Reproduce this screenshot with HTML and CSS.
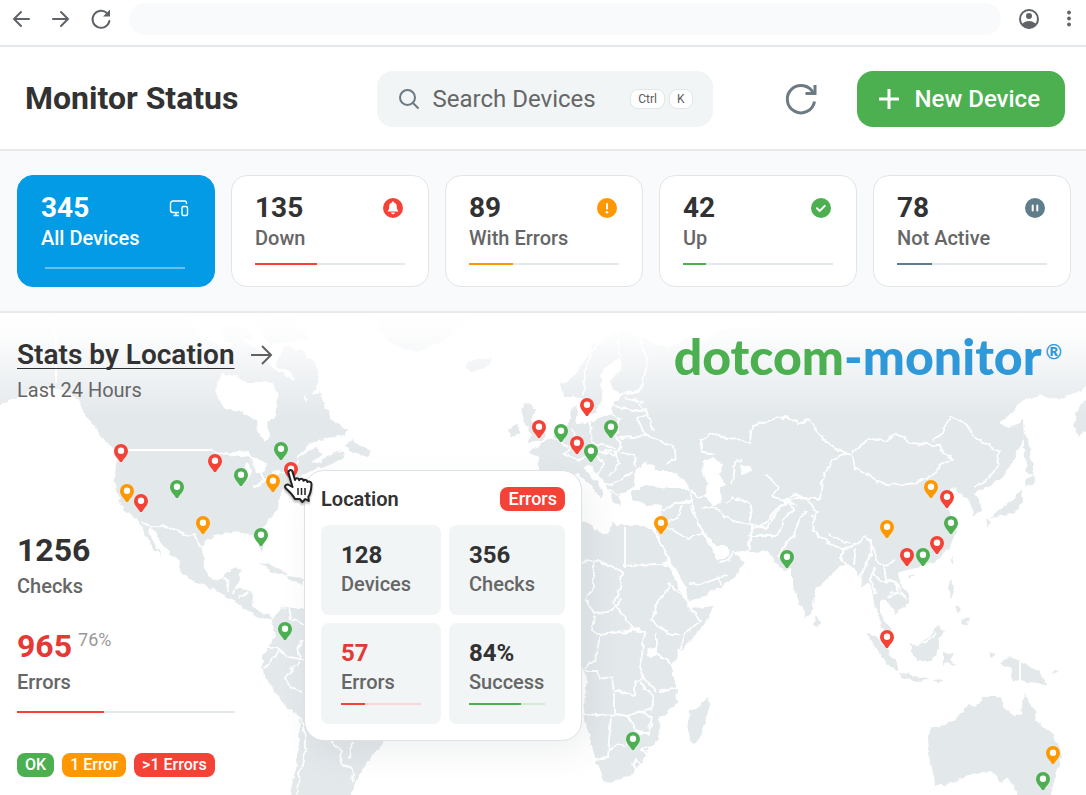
FILE: index.html
```html
<!DOCTYPE html>
<html lang="en">
<head>
<meta charset="utf-8">
<meta name="viewport" content="width=device-width, initial-scale=1">
<title>Monitor Status</title>
<link rel="stylesheet" href="styles.css">
</head>
<body>
<div class="page">
  <div class="chrome">
    <button class="chrome-btn" aria-label="Back"><svg viewBox="0 0 24 24"><path d="M20 12H5M12 5l-7 7 7 7"/></svg></button>
    <button class="chrome-btn" aria-label="Forward"><svg viewBox="0 0 24 24"><path d="M4 12h15M12 5l7 7-7 7"/></svg></button>
    <button class="chrome-btn" aria-label="Reload"><svg viewBox="0 0 24 24"><path d="M18.2 6.4A8.5 8.5 0 1 0 20.4 14"/><path class="solid" d="M21 2.5v7h-7z"/></svg></button>
    <input class="address" type="text" aria-label="Address">
    <button class="chrome-btn" aria-label="Profile"><svg viewBox="0 0 24 24"><circle cx="12" cy="12" r="9"/><circle class="solid" cx="12" cy="9" r="3"/><path class="solid" d="M5 17c2-2 4.500-3 7-3s5 1 7 3c-2 3-4.500 4.500-7 4.500S7 20 5 17z"/></svg></button>
    <button class="chrome-btn" aria-label="Menu"><svg viewBox="0 0 24 24"><g class="solid"><circle cx="12" cy="5.500" r="1.900"/><circle cx="12" cy="11.500" r="1.900"/><circle cx="12" cy="17.500" r="1.900"/></g></svg></button>
  </div>

  <header class="header">
    <h1 class="title">Monitor Status</h1>
    <label class="search">
      <svg class="search-icon" viewBox="0 0 24 24"><circle cx="10.500" cy="10.500" r="7.500"/><path d="M16 16l5.500 5.500"/></svg>
      <input class="search-input" type="text" placeholder="Search Devices" aria-label="Search Devices">
      <span class="keys"><kbd>Ctrl</kbd><kbd>K</kbd></span>
    </label>
    <button class="refresh" aria-label="Refresh"><svg viewBox="0 0 36 36"><path d="M30.500 12.500A13.700 13.700 0 1 0 31.500 20.500"/><path d="M32 4v8.500h-9.500"/></svg></button>
    <button class="new-device"><svg viewBox="0 0 24 24"><path d="M12 2v20M2 12h20"/></svg>New Device</button>
  </header>

  <nav class="filters">
    <button class="card card-active">
      <span class="card-top"><b>345</b><svg class="card-icon" viewBox="0 0 20 20"><path class="line" d="M17.500 6V5a2 2 0 0 0-2-2H4a2.500 2.500 0 0 0-2.500 2.500V12A2.500 2.500 0 0 0 4 14.500h6M7 14.500V17M4.500 17.500H10"/><rect class="line" x="13" y="8.500" width="5.500" height="9" rx="1.500"/></svg></span>
      <span class="card-label">All Devices</span>
      <span class="bar"><span class="fill"></span></span>
    </button>
    <button class="card">
      <span class="card-top"><b>135</b><svg class="card-icon" viewBox="0 0 20 20"><circle class="red" cx="10" cy="10" r="10"/><path class="white" d="M10 3.600c.7 0 1 .4 1 1 2 .6 2.800 2.200 2.800 4.200 0 2.400.6 3.600 1.700 4.700H4.500c1.100-1.100 1.700-2.300 1.700-4.700 0-2 .8-3.600 2.800-4.200 0-.6.3-1 1-1zM8 14.500h4c-.3 1.300-1 1.700-2 1.700s-1.700-.4-2-1.700z"/></svg></span>
      <span class="card-label">Down</span>
      <span class="bar"><span class="fill bg-red" style="width:41%"></span></span>
    </button>
    <button class="card">
      <span class="card-top"><b>89</b><svg class="card-icon" viewBox="0 0 20 20"><circle class="orange" cx="10" cy="10" r="10"/><path class="mark" d="M10 6v4.500"/><circle class="white" cx="10" cy="14.200" r="1.300"/></svg></span>
      <span class="card-label">With Errors</span>
      <span class="bar"><span class="fill bg-orange" style="width:29%"></span></span>
    </button>
    <button class="card">
      <span class="card-top"><b>42</b><svg class="card-icon" viewBox="0 0 20 20"><circle class="green" cx="10" cy="10" r="10"/><path class="mark" d="M6 10.300l2.800 2.600 5-5"/></svg></span>
      <span class="card-label">Up</span>
      <span class="bar"><span class="fill bg-green" style="width:15%"></span></span>
    </button>
    <button class="card">
      <span class="card-top"><b>78</b><svg class="card-icon" viewBox="0 0 20 20"><circle class="slate" cx="10" cy="10" r="10"/><path class="mark" d="M7.700 7.500v5M12.300 7.500v5"/></svg></span>
      <span class="card-label">Not Active</span>
      <span class="bar"><span class="fill bg-slate" style="width:23%"></span></span>
    </button>
  </nav>

  <main class="stats">
    <svg class="map" viewBox="0 313 1086 482" preserveAspectRatio="xMidYMid slice" aria-hidden="true">
      <defs>
        <filter id="rough" filterUnits="userSpaceOnUse" x="-20" y="290" width="1130" height="530">
          <feTurbulence type="fractalNoise" baseFrequency="0.13" numOctaves="2" seed="4"/>
          <feDisplacementMap in="SourceGraphic" scale="6" xChannelSelector="R" yChannelSelector="G"/>
        </filter>
        <linearGradient id="fade" x1="0" y1="0" x2="0" y2="1">
          <stop offset="0" stop-color="#fff"/>
          <stop offset="0.2" stop-color="#fff" stop-opacity="0.92"/>
          <stop offset="1" stop-color="#fff" stop-opacity="0"/>
        </linearGradient>
        <symbol id="pin" viewBox="0 0 16 20" overflow="visible">
          <path d="M8 1a7 7 0 0 1 7 7c0 4.500-4.200 7.500-5.600 10.200Q8 20 6.600 18.200C5.200 15.500 1 12.500 1 8a7 7 0 0 1 7-7z"/>
          <circle cx="8" cy="7.800" r="3.200" fill="#fff"/>
        </symbol>
      </defs>

      <g class="land" filter="url(#rough)">
        <!-- North and Central America -->
        <path d="M-20 300H180L200 335 225 350 240 340 262 352 272 368 285 375 298 385 305 402 313 395 320 391 325 408 333 420 347 429 345 436 325 438 312 442 302 450 296 460 305 452 316 447 322 455 310 464 320 462 334 452 345 453 335 463 318 468 305 474 294 480 288 486 282 490 278 500 279 509 270 518 262 528 264 544 262 551 258 544 254 537 245 533 230 532 215 535 206 542 203 550 204 568 212 580 224 577 230 569 241 569 239 580 235 588 248 590 253 595 252 606 260 613 270 614 274 620 266 618 256 617 248 610 240 604 226 596 215 590 195 582 182 573 179 562 166 550 156 533 150 526 148 532 157 548 162 556 153 548 143 530 138 519 126 511 118 497 115 480 116 460 113 449 100 436 92 424 84 412 76 398 64 390 50 387 35 389 14 399-5 408z"/>
        <path d="M345 446l8-8 6 7 13 6-4 5-13-3zM285 345l15 5 16 14 4 16-10 21-11-7-8-22-16-6zM255 322l35-5 20 22-40 5zM220 325l24 0 8 14-25 4z"/>
        <path d="M258 563l12 2 18 9-8 1-12-6zM286 576l18 2-2 6-15-4z"/>
        <path d="M370 300H480L455 335 415 352 392 345 380 330zM468 362l10-4 14 0-4 9-15 4-7-3z"/>
        <!-- South America -->
        <path d="M272 622L280 608 288 607 305 610 330 616 380 640 445 665 440 690 420 720 386 738 372 756 358 776 348 800H289L295 770 299 742 300 717 283 704 272 688 262 670 263 657 268 646 276 636z"/>
        <!-- Europe and Asia -->
        <path d="M1100 300V382L1073 394 1060 399 1045 396 1027 398 1012 411 1000 423 1010 428 1023 420 1024 437 1013 461 1000 480 986 488 973 493 980 500 982 512 973 515 971 502 962 495 955 488 947 490 944 500 953 497 947 505 954 518 956 532 950 546 940 558 925 566 910 569 898 573 900 583 909 594 909 604 902 609 895 615 892 608 886 599 879 602 879 613 886 622 892 632 893 642 886 634 881 626 876 610 873 590 869 582 863 588 860 578 856 569 847 564 838 568 830 576 815 590 814 608 806 618 799 602 794 590 790 568 785 570 776 563 768 551 752 552 734 551 724 545 716 545 706 533 702 534 711 548 718 559 727 557 731 549 737 556 744 563 735 578 720 587 700 598 688 601 686 588 679 574 669 557 660 540 656 532 661 521 662 505 646 506 634 501 631 492 646 486 668 489 690 489 681 478 668 471 658 471 646 461 636 470 633 487 623 493 618 497 622 506 614 503 608 490 600 477 589 464 583 468 592 478 604 490 600 499 590 484 578 475 540 475 538 458 528 452 538 447 549 439 556 434 566 428 571 418 570 409 576 405 578 413 576 424 586 423 600 419 611 414 614 402 624 394 640 393 642 389 622 393 613 389 611 380 622 368 620 358 608 364 600 376 602 390 600 404 594 414 586 412 582 398 574 397 563 397 560 384 574 376 583 363 592 346 606 336 622 330 636 334 650 342 670 348 690 335 700 345 720 330 760 325 800 300z"/>
        <path d="M1092 395l-14 12-5 16 6 14 13-12zM1024 428l5 18 5 29-7-3-3-24zM1025 481l10-6-2 8-7 5zM1022 489l1 14-9 11-14 1-12 4 12-9 13-9zM985 520l6 1-4 7z"/>
        <path d="M524 403l11 5-4 11 7 8 8 6-3 8-15 2 4-9-7-9-3-12zM509 431l9-7 2 9-10 4z"/>
        <!-- Africa -->
        <path d="M520 530L581 521 592 524 594 530 608 533 613 523 626 526 640 526 650 528 656 538 664 552 668 564 676 580 684 598 690 609 713 606 707 621 691 640 679 652 672 664 672 676 677 690 676 704 660 718 658 740 648 750 643 762 632 775 620 779 605 783 602 774 595 757 589 735 583 715 585 695 588 682 582 668 575 650 520 600z"/>
        <path d="M707 697l3 9-9 29-4 8-7-1-3-12 3-19 11-5zM816 615l5 7-4 5-3-4z"/>
        <!-- Islands of Southeast Asia -->
        <path d="M866 631l10 5 12 15 10 13 0 7-10-6-11-16zM899 673l16 3 15 4-14 1-15-4zM911 645l10-2 10-9 7-8 6 4-6 9 2 8-8 14-14 0-7-9zM944 653l10 0-4 6 6 7-9-5-3 5z"/>
        <path d="M950 580l5 9-4 9-3-8zM962 620l7-4-1 10-7-3zM954 605l7 4-4 6zM949 563l4-9-1 10zM909 577l6-2-4 5zM932 681l14-1-8 3zM988 652l8 2-4 4zM1000 662l10-5 10 4 15 7 7 10 8 9-12-4-12-1-13-2-2-10zM1050 673l8-2-3 3z"/>
        <!-- Australia -->
        <path d="M927 736L931 729 952 722 959 715 968 704 975 708 984 697 1001 697 1003 707 1015 717 1021 713 1024 692 1028 702 1035 709 1038 723 1050 732 1058 745 1062 756 1056 772 1050 800H1017L1015 786 1007 778 1003 783 991 771 970 774 955 781 945 785 934 785 932 768 928 754z"/>
      </g>

      <g class="water" filter="url(#rough)">
        <path d="M222 374l14 2 10 6 28 0 4 14-2 19-8 5 1 18-4 3-8-11-1-10-16-8-15-3-10-14 2-10z"/>
        <path d="M228 455l12-6 10 6-10 1zM252 458l14 4-3 10-7 0zM247 463l4 2-3 18-5-2zM253 486l14-9 4 2-14 8zM268 476l12-6 2 3-10 5z"/>
        <path d="M702 460l14-1 7 5-4 11 7 10-6 4 1 14-8 2-8-9 3-12-7-14zM740 465l9 0 2 7-9 2zM646 651l9-3 2 7-8 3z"/>
      </g>

      <g class="borders" filter="url(#rough)">
        <!-- Americas -->
        <path d="M212 450l18 6 18-3 10 10 6 18 18-8 12-4 4-9M142 523l14 4 20 1 10 8 8-2 6 12 6 3M224 577l5 4-2 10M239 581l-5 12M248 592l-10 6"/>
        <path d="M268 646l12 4-10 14-7 5M280 650l8 7 12 2 4 0M301 640l-3 12 3 6M289 607l2 12 12 4M300 662l-8 6-6 10 4 10 12 4M301 717l4 20 0 18-6 20-3 25M330 741l12 10-2 12 12 6 2 12M352 741l-2 20"/>
        <!-- Europe -->
        <path d="M583 396l2-22 5-22 16-14M620 356l-2-18M638 332l10 30-8 28M610 415l10 4-4 18 6 6M590 423l2 20 24 5M572 430l2 12-10 12 14 6 20-8 14-2M622 443l-6 12-18-4M552 438l16 8M595 455l8 8-4 12M614 450l6 14-10 12M620 452l14 4 2 12M620 438l26-2 28 10 2 12-10 6M645 436l-8-18 10-4-8-10M614 405l18 6 14-2M625 398l18 4M646 411l8 20M604 485l16-4 12-8M608 490l10 6"/>
        <!-- Central and eastern Asia -->
        <path d="M716 455l-14-2-2-12 12-8 8 4 16 2 14 4 2-18 16-4 18-5 12 8 10-4 6 8 12 14 20 12-14 6-10 22-2 16-26 0-8 4-12 14-6 12-14-2-24-6-18-14-12 4"/>
        <path d="M839 449l14 8 2 12 14 6 8 8 20 2 20-2 16-8 8-10 12-6-10-6-2-8-12 0-18-2-14-10-10 8-18-2-18 14M933 440l10-8 6-14 16 4 10 16 24 14-2 14-10 14-14 8"/>
        <path d="M732 484l2-22 8-2M766 474l12 14-6 8 18 6 4 10M783 502l10-8 12 4 12 14-4 8"/>
        <path d="M690 489l8 8 8-2M691 492l2 22 14 26M660 512l18-10 14 0M682 504l-4 14-14 6M664 526l24 12 14-4M726 504l8-6 16 6 2 26-4 22M752 530l12-6 16-18 8-4 8 4M749 536l28 0 6-16 10-10M806 511l-10 14-2 10-12 14-4 8"/>
        <path d="M812 515l2 16 14 12 14 6 12-4 12-8 6 6-2 12-10 22M828 533l14 8 8 2M842 548l0 12 4 6M856 548l-2 16M870 540l6 20 8 6 12-6M876 567l-6 12 6 14M884 566l2 14 12 4 8 16M872 574l12 8 12 0 2 12-8 4M888 598l4-6 14 4M912 645l14-2 10-10"/>
        <path d="M688 583l12 2 18-8 10-1M718 577l2 8M720 562l10-2 2-6"/>
        <!-- Africa -->
        <path d="M668 564l-8 0-36 1M622 572l-24-12-17 2M594 562l0 26-8 12 8 14 14-2 10-8 2-6M622 572l-2 16-6 14 20 28 10 2M594 616l-2 14 8 5 40-6M670 582l-4 12-8 6-6 20 16 14 12 0M668 584l16 12M690 610l8 8 4 2-18 14-5 18M656 633l0 20 18 12M644 632l-2 22-2 10 2 14 8 6 6 8M600 634l-4 26-12 8M584 671l14 0 2 8 12-2 2 14 20 4 2-14 8-2M614 694l0 20M640 682l14 14-2 12-14 4M659 692l18-4M614 714l14 2 12-6M583 714l32 2M611 718l-2 22-1 18-12 2M608 751l10-6 8 0 12-12 12 0M628 716l8 14 12 4 4-16-12-8M632 765l4-5 4 4-4 6zM643 749l6-2 2 5-5 2z"/>
      </g>
      <path class="borders" d="M56 313v70M128 450h84M625 527v41M1020 661v22"/>
      <rect width="1086" height="104" y="313" fill="url(#fade)"/>

      <g class="pins">
        <g class="red"><use href="#pin" x="113" y="443" width="16" height="20"/><use href="#pin" x="207" y="453" width="16" height="20"/><use href="#pin" x="133" y="493" width="16" height="20"/><use href="#pin" x="283" y="461" width="16" height="20"/><use href="#pin" x="579" y="397" width="16" height="20"/><use href="#pin" x="531" y="419" width="16" height="20"/><use href="#pin" x="569" y="435" width="16" height="20"/><use href="#pin" x="939" y="489" width="16" height="20"/><use href="#pin" x="929" y="535" width="16" height="20"/><use href="#pin" x="899" y="547" width="16" height="20"/><use href="#pin" x="879" y="629" width="16" height="20"/></g>
        <g class="orange"><use href="#pin" x="119" y="483" width="16" height="20"/><use href="#pin" x="195" y="515" width="16" height="20"/><use href="#pin" x="265" y="473" width="16" height="20"/><use href="#pin" x="653" y="515" width="16" height="20"/><use href="#pin" x="923" y="479" width="16" height="20"/><use href="#pin" x="879" y="519" width="16" height="20"/><use href="#pin" x="1045" y="745" width="16" height="20"/></g>
        <g class="green"><use href="#pin" x="273" y="441" width="16" height="20"/><use href="#pin" x="233" y="467" width="16" height="20"/><use href="#pin" x="169" y="479" width="16" height="20"/><use href="#pin" x="253" y="527" width="16" height="20"/><use href="#pin" x="277" y="621" width="16" height="20"/><use href="#pin" x="553" y="423" width="16" height="20"/><use href="#pin" x="603" y="419" width="16" height="20"/><use href="#pin" x="583" y="443" width="16" height="20"/><use href="#pin" x="943" y="515" width="16" height="20"/><use href="#pin" x="915" y="547" width="16" height="20"/><use href="#pin" x="779" y="549" width="16" height="20"/><use href="#pin" x="625" y="731" width="16" height="20"/><use href="#pin" x="1035" y="771" width="16" height="20"/></g>
      </g>
    </svg>

    <div class="stats-head">
      <div>
        <h2 class="stats-title"><a href="#locations">Stats by Location</a><svg viewBox="0 0 24 24"><path d="M2 12h20M13 3l9 9-9 9"/></svg></h2>
        <p class="period">Last 24 Hours</p>
      </div>
      <div class="brand"><span>dotcom</span><span class="brand-blue">-monitor</span><sup>®</sup></div>
    </div>

    <div class="summary">
      <p class="total">1256</p>
      <p class="label">Checks</p>
      <p class="total total-errors">965<small>76%</small></p>
      <p class="label">Errors</p>
      <div class="bar summary-bar"><span class="fill bg-red" style="width:40%"></span></div>
      <div class="legend"><span class="badge bg-green">OK</span><span class="badge bg-orange">1 Error</span><span class="badge bg-red">&gt;1 Errors</span></div>
    </div>

    <section class="popup">
      <div class="popup-head"><h3>Location</h3><span class="badge badge-large bg-red">Errors</span></div>
      <div class="tiles">
        <div class="tile"><b>128</b><span>Devices</span></div>
        <div class="tile"><b>356</b><span>Checks</span></div>
        <div class="tile"><b class="text-red">57</b><span>Errors</span><div class="bar track-red"><span class="fill bg-red" style="width:30%"></span></div></div>
        <div class="tile"><b>84%</b><span>Success</span><div class="bar track-green"><span class="fill bg-green" style="width:68%"></span></div></div>
      </div>
    </section>
    <svg class="cursor" viewBox="0 0 32 36" aria-hidden="true"><path d="M10.500 19L6.500 5C6 2 9.600 1 10.500 3.600L13 12c.5-2.500 3.600-2.300 4.200.2.700-2.200 3.800-1.800 4.300.6 1.200-1.700 3.700-1 4 1.200 1.800-1.300 4.200 0 4 2.400-.2 5.600-.7 9-3.200 12.600l.5 4-3.500-2-3 3-2.500-3H13c-2.500-5-6-7.500-9.500-11-1.500-2.500 1.500-4.500 3.500-3z"/><path class="cursor-lines" d="M16 20v7M19.500 20v7M23 20v7"/></svg>
  </main>
</div>
</body>
</html>
```

FILE: styles.css
```css
* { box-sizing: border-box; }

body {
  margin: 0;
  font-family: Roboto, "Liberation Sans", sans-serif;
  color: #323232;
  background: #fff;
}

h1, h2, h3, p { margin: 0; }

button {
  font: inherit;
  border: 0;
  background: none;
  padding: 0;
  color: inherit;
}

svg { display: block; }

.page {
  display: flex;
  flex-direction: column;
  min-height: 100vh;
}

/* Shared colours */
.red { fill: #f44336; }
.orange { fill: #ff9800; }
.green { fill: #4caf50; }
.slate { fill: #607d8b; }
.white { fill: #fff; }
.bg-red { background: #f44336; }
.bg-orange { background: #ff9800; }
.bg-green { background: #4caf50; }
.bg-slate { background: #607d8b; }

/* Browser bar */
.chrome {
  display: flex;
  gap: 16px;
  align-items: center;
  padding: 3px 5px 10px 9px;
  border-bottom: 2px solid #e3e8ea;
}

.chrome-btn svg {
  width: 24px;
  height: 24px;
  fill: none;
  stroke: #5f6368;
  stroke-width: 2;
  stroke-linecap: round;
}

.chrome-btn .solid { fill: #5f6368; stroke: none; }

.address {
  flex: 1;
  min-width: 0;
  height: 32px;
  border: 0;
  border-radius: 16px;
  background: #f8fafc;
  padding: 0 16px;
}

/* Page header */
.header {
  display: flex;
  align-items: center;
  padding: 24px 21px 22px 25px;
  border-bottom: 2px solid #e8eaec;
}

.title {
  margin-right: auto;
  padding-bottom: 2px;
  font-size: 32px;
  line-height: 40px;
  font-weight: 700;
}

.search {
  display: flex;
  align-items: center;
  width: 336px;
  height: 56px;
  padding: 0 20px;
  border-radius: 16px;
  background: #f1f5f6;
}

.search-icon {
  width: 24px;
  height: 24px;
  flex: none;
  fill: none;
  stroke: #6c7a84;
  stroke-width: 2;
}

.search-input {
  flex: 1;
  min-width: 0;
  margin-left: 12px;
  padding: 0;
  border: 0;
  background: none;
  font: 400 24px/32px Roboto, "Liberation Sans", sans-serif;
}

.search-input::placeholder { color: #666; opacity: 1; }

.keys { display: flex; gap: 4px; }

kbd {
  padding: 0 7px;
  border: 1px solid #e2e6e8;
  border-radius: 8px;
  background: #fff;
  color: #5c5c5c;
  font: 400 12px/18px Roboto, "Liberation Sans", sans-serif;
}

.refresh { margin: 0 32px 0 64px; padding: 0 6px; }

.refresh svg {
  width: 36px;
  height: 36px;
  fill: none;
  stroke: #6c7a84;
  stroke-width: 3;
}

.new-device {
  display: flex;
  align-items: center;
  gap: 14px;
  height: 56px;
  padding: 0 25px 0 20px;
  border-radius: 16px;
  background: #4caf50;
  color: #fff;
  font-size: 24px;
  font-weight: 500;
}

.new-device svg {
  width: 24px;
  height: 24px;
  fill: none;
  stroke: #fff;
  stroke-width: 3;
}

/* Filter cards */
.filters {
  display: grid;
  grid-template-columns: repeat(5, 1fr);
  gap: 16px;
  padding: 24px 15px 24px 17px;
  border-bottom: 2px solid #e8eaec;
  background: #f8fafc;
}

.card {
  display: flex;
  flex-direction: column;
  padding: 16px 23px 21px;
  border: 1px solid #e2e6e9;
  border-radius: 16px;
  background: #fff;
  text-align: left;
}

.card-top {
  display: flex;
  justify-content: space-between;
  align-items: center;
  padding-right: 2px;
}

.card-top b { font-size: 28px; line-height: 32px; font-weight: 700; }

.card-icon { width: 20px; height: 20px; }

.card-icon .line {
  fill: none;
  stroke: #fff;
  stroke-width: 1.4;
}

.card-icon .mark {
  fill: none;
  stroke: #fff;
  stroke-width: 2;
  stroke-linecap: round;
  stroke-linejoin: round;
}

.card-label {
  margin-top: 2px;
  font-size: 20px;
  line-height: 24px;
  font-weight: 500;
  color: #666;
}

.bar {
  display: block;
  height: 2px;
  background: #e3e8ea;
}

.fill { display: block; height: 100%; }

.card .bar { margin-top: 13px; }

.card-active {
  padding-bottom: 17px;
  border-color: #039be5;
  background: #039be5;
  color: #fff;
}

.card-active .card-label { color: #fff; }

.card-active .bar {
  margin: 17px 6px 0 4px;
  background: #67c0ee;
}

/* Map section */
.stats {
  position: relative;
  flex: 1;
  padding: 26px 24px 18px 17px;
}

.map {
  position: absolute;
  inset: 0;
  width: 100%;
  height: 100%;
}

.land { fill: #e3e8eb; }
.water { fill: #fff; }

.borders {
  fill: none;
  stroke: #fff;
  stroke-width: 1.8;
}

.stats-head, .summary { position: relative; }

.stats-head {
  display: flex;
  justify-content: space-between;
  align-items: flex-start;
}

.stats-title {
  display: flex;
  align-items: center;
  gap: 14px;
  font-size: 28px;
  line-height: 32px;
  font-weight: 600;
}

.stats-title a {
  color: inherit;
  text-decoration: underline 1px;
  text-decoration-skip-ink: none;
  text-underline-offset: 4px;
}

.stats-title svg {
  width: 24px;
  height: 24px;
  fill: none;
  stroke: #616161;
  stroke-width: 2;
}

.period {
  margin-top: 7px;
  font-size: 20px;
  line-height: 24px;
  color: #666;
}

.brand {
  display: flex;
  font-family: Lato, sans-serif;
  font-size: 50px;
  line-height: 34px;
  font-weight: 900;
  color: #4caf50;
}

.brand-blue, .brand sup { color: #2e98d8; }

.brand sup {
  font-size: 20px;
  line-height: 24px;
  font-weight: 700;
  margin-left: 4px;
}

.summary { width: 218px; margin-top: 128px; }

.total {
  display: flex;
  gap: 6px;
  font-size: 32px;
  line-height: 40px;
  font-weight: 700;
}

.total-errors { margin-top: 28px; color: #e53935; }

.total small {
  font-size: 18px;
  line-height: 28px;
  font-weight: 400;
  color: #999;
}

.label {
  margin-top: 4px;
  font-size: 20px;
  line-height: 24px;
  font-weight: 500;
  color: #666;
}

.summary-bar { margin-top: 17px; }

.legend { display: flex; gap: 8px; margin-top: 40px; }

.badge {
  padding: 0 8px;
  border-radius: 8px;
  color: #fff;
  font-size: 16px;
  line-height: 24px;
  font-weight: 500;
  white-space: nowrap;
}

.badge-large { font-size: 18px; }

/* Location popup */
.popup {
  position: absolute;
  left: 304px;
  top: 157px;
  width: 278px;
  padding: 16px;
  border: 1px solid #dce2e5;
  border-radius: 20px;
  background: #fff;
  box-shadow: 8px 12px 32px rgba(60, 75, 85, 0.08);
}

.popup-head {
  display: flex;
  justify-content: space-between;
  align-items: center;
}

.popup-head h3 { font-size: 20px; line-height: 24px; font-weight: 600; }

.tiles {
  display: grid;
  grid-template-columns: 120px 1fr;
  gap: 8px;
  margin-top: 14px;
}

.tile {
  display: flex;
  flex-direction: column;
  padding: 16px 20px 19px;
  border-radius: 8px;
  background: #f1f5f6;
}

.tile b { font-size: 24px; line-height: 28px; font-weight: 700; }
.tile .text-red { color: #e53935; }

.tile > span {
  margin-top: 3px;
  font-size: 20px;
  line-height: 24px;
  font-weight: 500;
  color: #666;
}

.tile .bar { margin-top: 9px; }
.tile .track-red { background: #fcd5d8; }
.tile .track-green { background: #d3ebd5; }

.cursor {
  position: absolute;
  left: 282px;
  top: 155px;
  width: 32px;
  height: 36px;
  fill: #fff;
  stroke: #222;
  stroke-width: 2;
  stroke-linejoin: round;
  filter: drop-shadow(0 2px 1px rgba(0, 0, 0, 0.3));
}

.cursor-lines { stroke-width: 1.5; }
```
